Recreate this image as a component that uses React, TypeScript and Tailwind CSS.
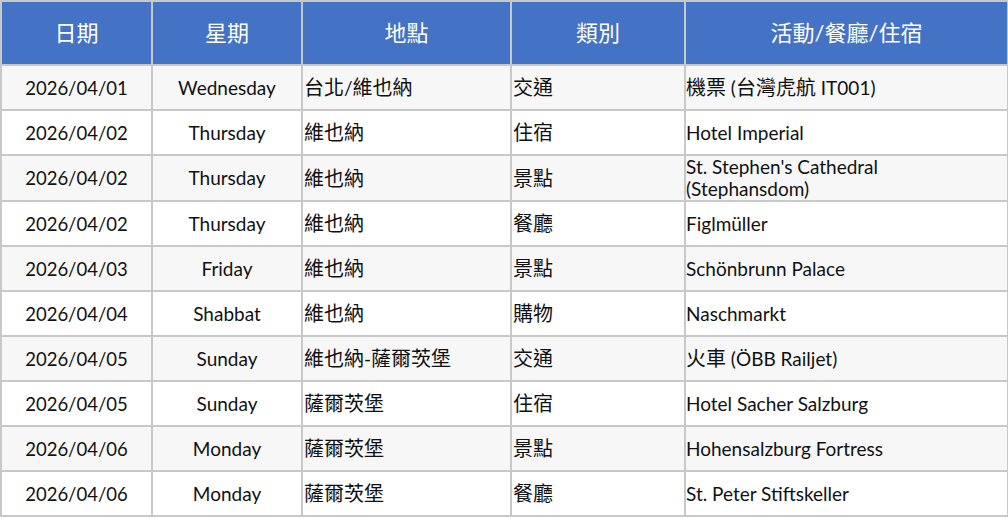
const rows: [string, string, string, string, string][] = [
  ['2026/04/01', 'Wednesday', '台北/維也納', '交通', '機票 (台灣虎航 IT001)'],
  ['2026/04/02', 'Thursday', '維也納', '住宿', 'Hotel Imperial'],
  ['2026/04/02', 'Thursday', '維也納', '景點', "St. Stephen's Cathedral\n(Stephansdom)"],
  ['2026/04/02', 'Thursday', '維也納', '餐廳', 'Figlmüller'],
  ['2026/04/03', 'Friday', '維也納', '景點', 'Schönbrunn Palace'],
  ['2026/04/04', 'Shabbat', '維也納', '購物', 'Naschmarkt'],
  ['2026/04/05', 'Sunday', '維也納-薩爾茨堡', '交通', '火車 (ÖBB Railjet)'],
  ['2026/04/05', 'Sunday', '薩爾茨堡', '住宿', 'Hotel Sacher Salzburg'],
  ['2026/04/06', 'Monday', '薩爾茨堡', '景點', 'Hohensalzburg Fortress'],
  ['2026/04/06', 'Monday', '薩爾茨堡', '餐廳', 'St. Peter Stiftskeller'],
];

const headers = ['日期', '星期', '地點', '類別', '活動/餐廳/住宿'];

// CJK glyphs sit a bit larger than the Latin text in the sheet
function Mixed({ text }: { text: string }) {
  const lines = text.split('\n');
  return (
    <>
      {lines.map((line, li) => (
        <span key={li}>
          {li > 0 && <br />}
          {line.split(/([\u3000-\u9fff\uff00-\uffef]+)/).map((part, i) =>
            /[\u3000-\u9fff\uff00-\uffef]/.test(part) ? (
              <span key={i} className="text-[20px]">
                {part}
              </span>
            ) : (
              part
            ),
          )}
        </span>
      ))}
    </>
  );
}

export default function App() {
  return (
    <div
      className="w-[1008px] bg-white"
      style={{ fontFamily: 'Lato, "Noto Sans CJK TC", sans-serif' }}
    >
      <table className="w-[1007px] table-fixed border-collapse text-[19px] leading-[22px] text-[#111]">
        <colgroup>
          <col className="w-[151px]" />
          <col className="w-[150px]" />
          <col className="w-[209px]" />
          <col className="w-[174px]" />
          <col className="w-[323px]" />
        </colgroup>
        <thead>
          <tr className="h-[64px] bg-[#4472c4] text-white">
            {headers.map((h) => (
              <th
                key={h}
                className="border-2 border-[#c8c8c8] text-center text-[22px] font-normal"
              >
                {h}
              </th>
            ))}
          </tr>
        </thead>
        <tbody>
          {rows.map((r, i) => (
            <tr
              key={i}
              className={i % 2 === 0 ? 'h-[45px] bg-[#f7f7f7]' : 'h-[45px] bg-white'}
            >
              <td className="border-2 border-[#c8c8c8] text-center text-[18.5px]">{r[0]}</td>
              <td className="border-2 border-[#c8c8c8] text-center">{r[1]}</td>
              <td className="border-2 border-[#c8c8c8] pl-[1px] pr-[2px]">
                <Mixed text={r[2]} />
              </td>
              <td className="border-2 border-[#c8c8c8] pl-[1px] pr-[2px]">
                <Mixed text={r[3]} />
              </td>
              <td className="border-2 border-[#c8c8c8] pl-0 pr-[2px]">
                <Mixed text={r[4]} />
              </td>
            </tr>
          ))}
        </tbody>
      </table>
    </div>
  );
}
